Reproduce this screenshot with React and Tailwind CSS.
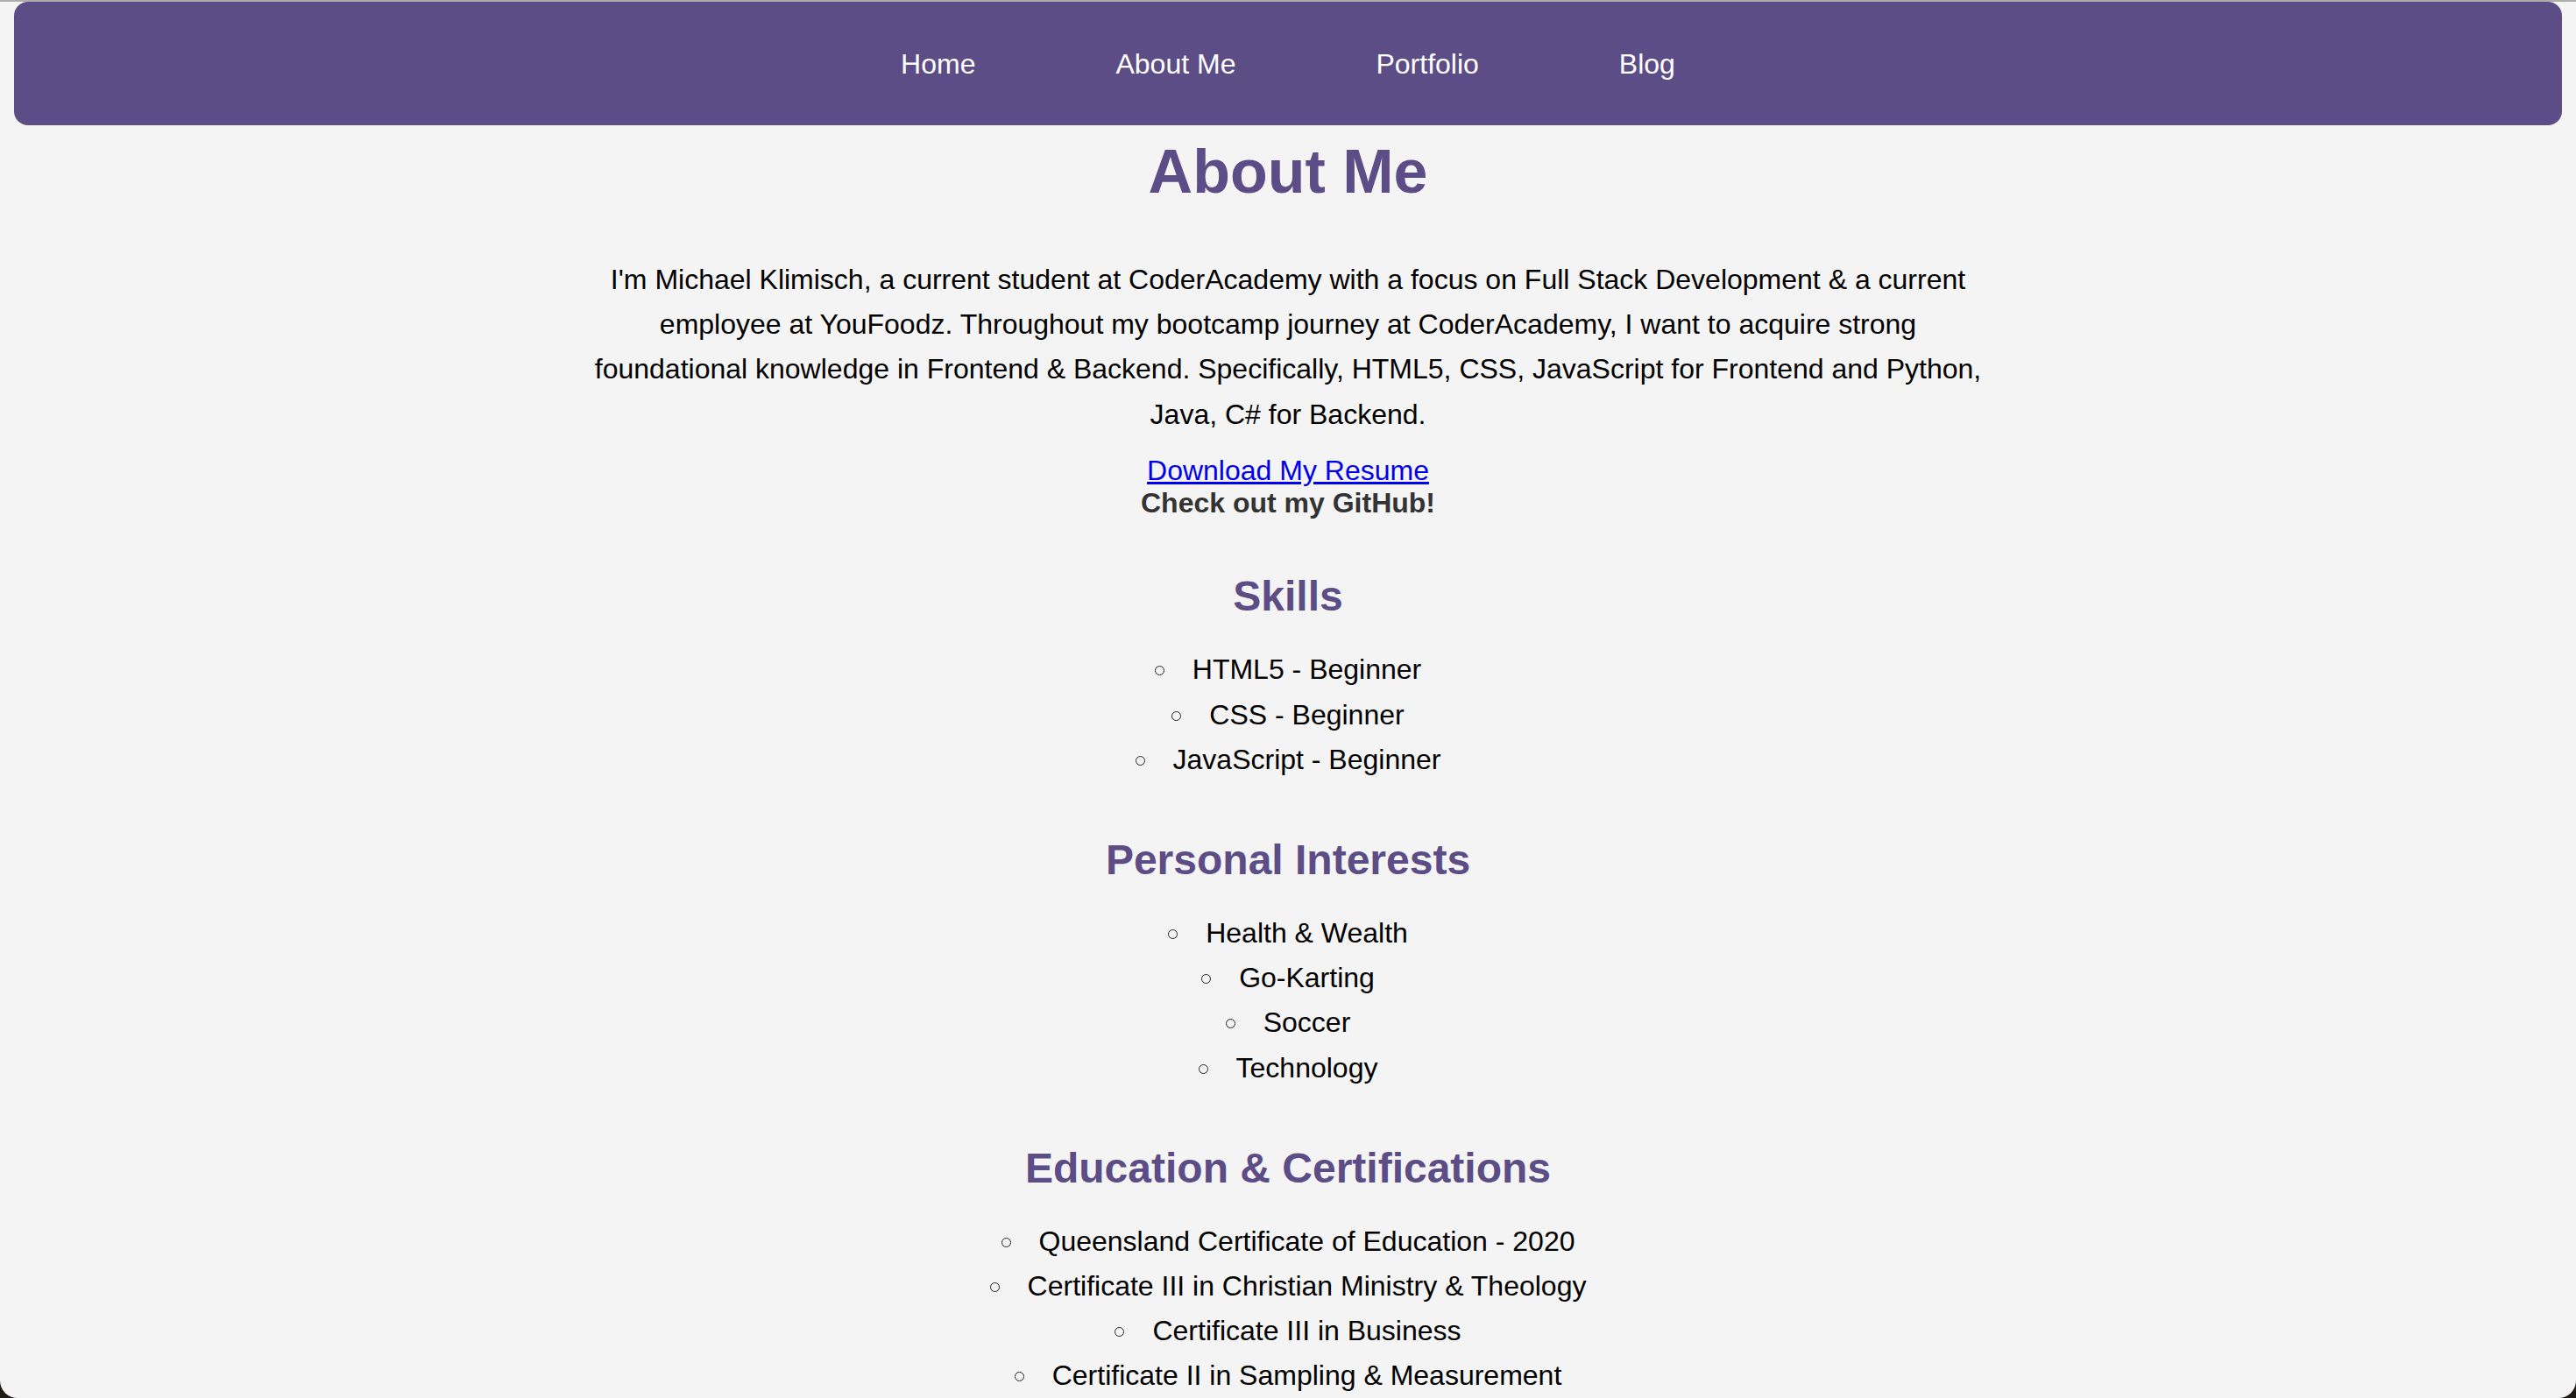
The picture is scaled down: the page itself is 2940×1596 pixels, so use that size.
import React from "react";

const font = { fontFamily: '"Liberation Sans", Arial, Helvetica, sans-serif' };

function Item({ children }) {
  return (
    <li className="text-center text-[32px] leading-[51.2px] text-black">
      <span className="inline-block w-[11px] h-[11px] rounded-full border-[1.5px] border-[#222] mr-[32px] align-[4px]" />
      {children}
    </li>
  );
}

function Section({ title, items }) {
  return (
    <section>
      <h2 className="mt-[61px] text-center text-[48px] leading-[55px] font-bold text-[#5c4d87]">
        {title}
      </h2>
      <ul className="mt-[31px]">
        {items.map((it) => (
          <Item key={it}>{it}</Item>
        ))}
      </ul>
    </section>
  );
}

export default function App() {
  return (
    <div className="h-[1596px] w-[2940px] overflow-hidden bg-[#1c1b14]" style={font}>
      <div className="h-full w-full overflow-hidden rounded-b-[20px] bg-[#f4f4f4]">
        <div className="h-[2px] bg-[#adadad]" />
        <nav className="mx-4 flex h-[141px] items-center justify-center gap-[160px] rounded-[16px] bg-[#5c4d87] text-[32px] text-white">
          <a>Home</a>
          <a>About Me</a>
          <a>Portfolio</a>
          <a>Blog</a>
        </nav>
        <main>
          <h1 className="mt-[13px] text-center text-[70px] leading-[80px] font-bold text-[#5c4d87]">
            About Me
          </h1>
          <p className="mx-auto mt-[58px] max-w-[1600px] text-center text-[32px] leading-[51.2px] text-black">
            I'm Michael Klimisch, a current student at CoderAcademy with a focus on Full Stack Development &amp; a current employee at YouFoodz. Throughout my bootcamp journey at CoderAcademy, I want to acquire strong foundational knowledge in Frontend &amp; Backend. Specifically, HTML5, CSS, JavaScript for Frontend and Python, Java, C# for Backend.
          </p>
          <div className="mt-[20px] text-center text-[32px] leading-[36.8px]">
            <a className="text-[#0000ee] underline">Download My Resume</a>
          </div>
          <div className="text-center text-[32px] leading-[36.8px] font-bold text-[#333]">
            Check out my GitHub!
          </div>
          <Section
            title="Skills"
            items={["HTML5 - Beginner", "CSS - Beginner", "JavaScript - Beginner"]}
          />
          <Section
            title="Personal Interests"
            items={["Health & Wealth", "Go-Karting", "Soccer", "Technology"]}
          />
          <Section
            title="Education & Certifications"
            items={[
              "Queensland Certificate of Education - 2020",
              "Certificate III in Christian Ministry & Theology",
              "Certificate III in Business",
              "Certificate II in Sampling & Measurement",
            ]}
          />
        </main>
      </div>
    </div>
  );
}
